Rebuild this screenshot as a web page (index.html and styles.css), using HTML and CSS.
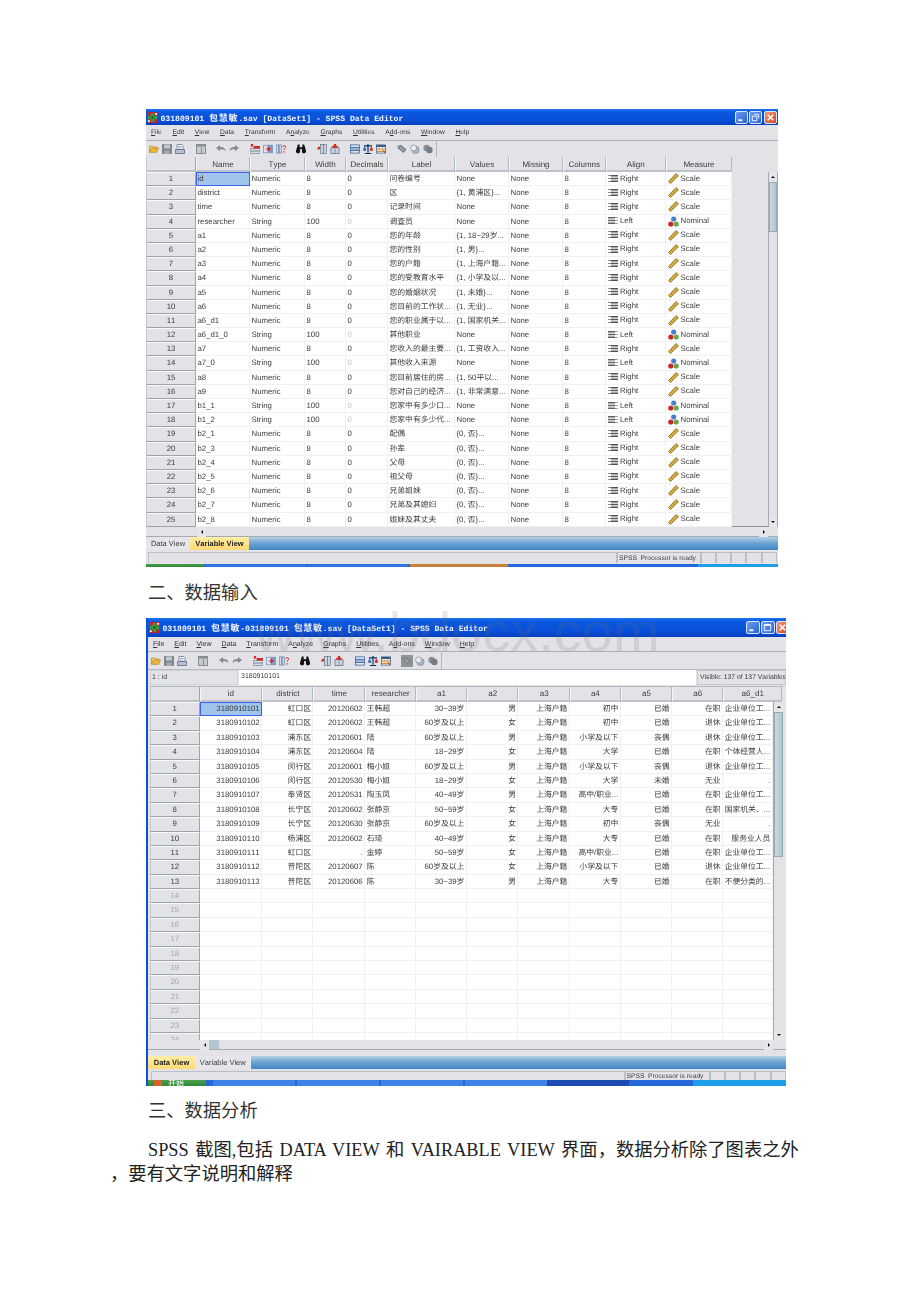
FILE: index.html
```html
<!DOCTYPE html>
<html lang="zh-CN">
<head>
	<meta charset="UTF-8">
	<title>SPSS</title>
	<link rel="stylesheet" href="styles.css">
</head>
<body>
<svg class="sprite" xmlns="http://www.w3.org/2000/svg">
	<symbol id="app" viewBox="0 0 12 12"><rect width="12" height="12" fill="#c8202a"/><path d="M4 1h4v3h3v4H8v3H4V8H1V4h3z" fill="#2f9e3a"/><path d="M1 9h2v2H1zM9 1h2v2H9z" fill="#fff"/><path d="M5 5h2v2H5z" fill="#143"/></symbol>
	<symbol id="min" viewBox="0 0 12 12"><rect x="2.5" y="8" width="4.5" height="2" fill="#fff"/></symbol>
	<symbol id="restore" viewBox="0 0 12 12"><path d="M4.5 2.5h5v4.5M2.5 4.5h5v5h-5z" fill="none" stroke="#fff"/></symbol>
	<symbol id="max" viewBox="0 0 12 12"><path d="M2.500 3.500h7v6h-7z" fill="none" stroke="#fff"/><path d="M2.500 3h7" stroke="#fff" stroke-width="1.500"/></symbol>
	<symbol id="close" viewBox="0 0 12 12"><path d="M3 3l6 6M9 3l-6 6" stroke="#fff" stroke-width="1.800"/></symbol>

	<symbol id="al-right" viewBox="0 0 10 8"><path d="M0 0h3v1H0zM0 3h3v1H0zM0 6h3v1H0z" fill="#8a8f96"/><path d="M3 0h7v1.500H3zM3 2.800h7v1.500H3zM3 5.600h7v1.500H3z" fill="#4d5359"/></symbol>
	<symbol id="al-left" viewBox="0 0 10 8"><path d="M0 0h7v1.500H0zM0 2.800h7v1.500H0zM0 5.600h7v1.500H0z" fill="#5b6167"/><path d="M7 0h3v1H7zM7 3h3v1H7zM7 6h3v1H7z" fill="#a0a5aa"/></symbol>
	<symbol id="scale" viewBox="0 0 11 11"><path d="M.5 8.500l7.500-8 2.500 2.300-8 7.700z" fill="#dcae3c" stroke="#6e5c22" stroke-width=".7"/><path d="M3 6.500l1 1M5 4.500l1 1M7 2.500l1 1" stroke="#6e5c22" stroke-width=".6"/></symbol>
	<symbol id="nominal" viewBox="0 0 11 11"><circle cx="5.700" cy="3" r="2.600" fill="#4a7fd0"/><circle cx="2.800" cy="8" r="2.600" fill="#c8262c"/><circle cx="8.200" cy="8" r="2.600" fill="#6aa84a"/></symbol>

	<symbol id="t-open" viewBox="0 0 12 10"><path d="M.5 9V1.500h4l1 1h4V4" fill="#f4d776" stroke="#a87e18" stroke-width=".8"/><path d="M.5 9l2.300-5h8.700L9 9z" fill="#f2b93a" stroke="#a87e18" stroke-width=".8"/></symbol>
	<symbol id="t-save" viewBox="0 0 10 10"><rect width="10" height="10" rx="1" fill="#7f868c"/><rect x="2" y=".5" width="6" height="4" fill="#c4c8cc"/><rect x="2.500" y="6.500" width="5" height="3.500" fill="#a6abb0"/></symbol>
	<symbol id="t-print" viewBox="0 0 10 10"><path d="M2 .5h5l1 1v4H2z" fill="#fff" stroke="#6e7a88" stroke-width=".8"/><path d="M.5 5.500h9V9.500h-9z" fill="#b7c0d0" stroke="#5c6a80" stroke-width=".8"/><path d="M3 2.500h3.500M3 4h3.500" stroke="#6a8cc0" stroke-width=".7"/></symbol>
	<symbol id="t-recall" viewBox="0 0 10 10"><rect width="10" height="10" fill="#888d92"/><rect x="1" y="2.500" width="8" height="6.500" fill="#c8cbce"/><path d="M5.500 3v6" stroke="#888d92"/></symbol>
	<symbol id="t-undo" viewBox="0 0 11 9"><path d="M4.500 0v2.300c3.500-.3 6 1.200 6 4.700-1.200-1.800-3-2.300-6-2.200V7L0 3.500z" fill="#868b90"/></symbol>
	<symbol id="t-redo" viewBox="0 0 11 9"><path d="M6.500 0v2.300C3 2 .5 3.500.5 7c1.200-1.800 3-2.300 6-2.200V7L11 3.500z" fill="#868b90"/></symbol>
	<symbol id="t-case" viewBox="0 0 11 11"><path d="M1 0h2.500v2.500h-1v1.200L.5 2.500H1z" fill="#d02a24"/><rect x="0" y="5" width="11" height="2.800" fill="#d6dde6" stroke="#5b6a7c" stroke-width=".6"/><rect x="0" y="7.800" width="11" height="2.800" fill="#d6dde6" stroke="#5b6a7c" stroke-width=".6"/><rect x="4" y="2.200" width="7" height="2.800" fill="#d02a24"/></symbol>
	<symbol id="t-var" viewBox="0 0 12 10"><rect width="12" height="10" fill="#7d9cc4"/><rect x="1" y="1" width="4.500" height="8" fill="#dfe6f0"/><path d="M3 5h5M6 2.500L9 5 6 7.500z" fill="#d8262a" stroke="#d8262a"/></symbol>
	<symbol id="t-vars" viewBox="0 0 12 11"><path d="M.5.500h2.500v10H.5zM4 .500h2.500v10H4z" fill="#d4dde8" stroke="#5a7aa0" stroke-width=".8"/><path d="M8 3c.5-2 3.500-2 3.500 0 0 1.500-1.700 1.500-1.700 3.500M9.800 8v2" fill="none" stroke="#d02a24" stroke-width="1.200"/></symbol>
	<symbol id="t-find" viewBox="0 0 11 10"><path d="M2 0h2v3h3V0h2l2 7a2.300 2.300 0 0 1-4.500 1V5h-2v3a2.300 2.300 0 0 1-4.500-1z" fill="#111"/></symbol>
	<symbol id="t-inscase" viewBox="0 0 11 11"><path d="M1 3h2.500v2.500H1zM0 5h3v1H0z" fill="#d02a24"/><rect x="4" y=".5" width="3" height="10" fill="#c9d4e0" stroke="#5a6c80" stroke-width=".7"/><rect x="7" y=".5" width="3.500" height="10" fill="#c9d4e0" stroke="#5a6c80" stroke-width=".7"/></symbol>
	<symbol id="t-insvar" viewBox="0 0 10 11"><path d="M.5 4h9v6.500h-9z" fill="#c9d4e0" stroke="#5a6c80" stroke-width=".8"/><path d="M5 4v6.500" stroke="#5a6c80" stroke-width=".7"/><path d="M3.800 0h2.400v2h1.800v2H2V2h1.800z" fill="#d02a24"/></symbol>
	<symbol id="t-split" viewBox="0 0 11 10"><rect x=".5" y=".5" width="10" height="9" fill="#dce6f0" stroke="#2e5a94" stroke-width=".8"/><path d="M.5 3.500h10M.5 6.500h10" stroke="#2e5a94"/><rect x="1" y="4" width="9" height="2" fill="#8fb0d8"/></symbol>
	<symbol id="t-weight" viewBox="0 0 11 11"><path d="M5.500 0v9.500M2 10.500h7M1 2h9" stroke="#0c2f66" stroke-width="1.300"/><path d="M0 6l1.800-3.500L3.600 6a1.800 1.800 0 0 1-3.600 0z" fill="#2f6ec0"/><path d="M7.400 6l1.800-3.500L11 6a1.800 1.800 0 0 1-3.600 0z" fill="#c8302c"/></symbol>
	<symbol id="t-select" viewBox="0 0 11 10"><rect x=".5" y=".5" width="10" height="9" fill="#f2f0e4" stroke="#3c5a88" stroke-width=".8"/><rect x=".5" y=".5" width="10" height="2.300" fill="#3c5a88"/><path d="M3.500 3v6.500M7 3v6.500" stroke="#b8c0cc"/><path d="M1 5h9M1 7.800h9" stroke="#e08a20" stroke-width="1.100"/><path d="M8 6.500l2 3" stroke="#c8202a"/></symbol>
	<symbol id="t-labels" viewBox="0 0 11 10"><path d="M.5 1.500l4-1 6 5-3.500 4-6-5z" fill="#7a8086"/><path d="M2 3l2-.5 4 3.300-1.500 1.700z" fill="#a3a8ad"/></symbol>
	<symbol id="t-sets" viewBox="0 0 11 10"><circle cx="6" cy="6" r="4" fill="#9eb8d0" stroke="#7e8790" stroke-width=".7"/><circle cx="4" cy="3.800" r="3.300" fill="#e8ecf0" stroke="#7e8790" stroke-width=".7"/></symbol>
	<symbol id="t-all" viewBox="0 0 11 10"><circle cx="4" cy="4" r="3.600" fill="#8a8f94"/><circle cx="7" cy="6" r="3.600" fill="#777c82"/></symbol>
</svg>

<div class="page">
	<section class="win win-vars">
		<div class="titlebar">
			<svg class="appicon"><use href="#app"/></svg>
			<span class="title">031809101 <i>包慧敏</i>.sav [DataSet1] - SPSS Data Editor</span>
			<span class="wbtns">
				<span class="wbtn"><svg><use href="#min"/></svg></span>
				<span class="wbtn"><svg><use href="#restore"/></svg></span>
				<span class="wbtn red"><svg><use href="#close"/></svg></span>
			</span>
		</div>
		<ul class="menu">
			<li><u>F</u>ile</li><li><u>E</u>dit</li><li><u>V</u>iew</li><li><u>D</u>ata</li><li><u>T</u>ransform</li><li>A<u>n</u>alyze</li><li><u>G</u>raphs</li><li><u>U</u>tilities</li><li>A<u>d</u>d-ons</li><li><u>W</u>indow</li><li><u>H</u>elp</li>
		</ul>
		<div class="toolbar">
			<div class="tgroup"><svg><use href="#t-open"/></svg><svg><use href="#t-save"/></svg><svg><use href="#t-print"/></svg></div>
			<div class="tgroup"><svg><use href="#t-recall"/></svg></div>
			<div class="tgroup"><svg><use href="#t-undo"/></svg><svg><use href="#t-redo"/></svg></div>
			<div class="tgroup"><svg><use href="#t-case"/></svg><svg><use href="#t-var"/></svg><svg><use href="#t-vars"/></svg></div>
			<div class="tgroup"><svg><use href="#t-find"/></svg></div>
			<div class="tgroup"><svg><use href="#t-inscase"/></svg><svg><use href="#t-insvar"/></svg></div>
			<div class="tgroup"><svg><use href="#t-split"/></svg><svg><use href="#t-weight"/></svg><svg><use href="#t-select"/></svg></div>
			<div class="tgroup last"><svg><use href="#t-labels"/></svg><svg><use href="#t-sets"/></svg><svg><use href="#t-all"/></svg></div>
		</div>
		<div class="sheet">
			<div class="row head"><b></b><span>Name</span><span>Type</span><span>Width</span><span>Decimals</span><span>Label</span><span>Values</span><span>Missing</span><span>Columns</span><span>Align</span><span>Measure</span></div>
			<div class="sheet-body">
				<div class="rows">
					<div class="row"><b>1</b><span class="sel">id</span><span>Numeric</span><span>8</span><span>0</span><span>问卷编号</span><span>None</span><span>None</span><span>8</span><span class="m"><svg class="al"><use href="#al-right"/></svg>Right</span><span class="m"><svg class="ms"><use href="#scale"/></svg>Scale</span></div>
					<div class="row"><b>2</b><span>district</span><span>Numeric</span><span>8</span><span>0</span><span>区</span><span>{1, 黄浦区}...</span><span>None</span><span>8</span><span class="m"><svg class="al"><use href="#al-right"/></svg>Right</span><span class="m"><svg class="ms"><use href="#scale"/></svg>Scale</span></div>
					<div class="row"><b>3</b><span>time</span><span>Numeric</span><span>8</span><span>0</span><span>记录时间</span><span>None</span><span>None</span><span>8</span><span class="m"><svg class="al"><use href="#al-right"/></svg>Right</span><span class="m"><svg class="ms"><use href="#scale"/></svg>Scale</span></div>
					<div class="row"><b>4</b><span>researcher</span><span>String</span><span>100</span><span class="off">0</span><span>调查员</span><span>None</span><span>None</span><span>8</span><span class="m"><svg class="al"><use href="#al-left"/></svg>Left</span><span class="m"><svg class="ms"><use href="#nominal"/></svg>Nominal</span></div>
					<div class="row"><b>5</b><span>a1</span><span>Numeric</span><span>8</span><span>0</span><span>您的年龄</span><span>{1, 18~29岁...</span><span>None</span><span>8</span><span class="m"><svg class="al"><use href="#al-right"/></svg>Right</span><span class="m"><svg class="ms"><use href="#scale"/></svg>Scale</span></div>
					<div class="row"><b>6</b><span>a2</span><span>Numeric</span><span>8</span><span>0</span><span>您的性别</span><span>{1, 男}...</span><span>None</span><span>8</span><span class="m"><svg class="al"><use href="#al-right"/></svg>Right</span><span class="m"><svg class="ms"><use href="#scale"/></svg>Scale</span></div>
					<div class="row"><b>7</b><span>a3</span><span>Numeric</span><span>8</span><span>0</span><span>您的户籍</span><span>{1, 上海户籍...</span><span>None</span><span>8</span><span class="m"><svg class="al"><use href="#al-right"/></svg>Right</span><span class="m"><svg class="ms"><use href="#scale"/></svg>Scale</span></div>
					<div class="row"><b>8</b><span>a4</span><span>Numeric</span><span>8</span><span>0</span><span>您的受教育水平</span><span>{1, 小学及以...</span><span>None</span><span>8</span><span class="m"><svg class="al"><use href="#al-right"/></svg>Right</span><span class="m"><svg class="ms"><use href="#scale"/></svg>Scale</span></div>
					<div class="row"><b>9</b><span>a5</span><span>Numeric</span><span>8</span><span>0</span><span>您的婚姻状况</span><span>{1, 未婚}...</span><span>None</span><span>8</span><span class="m"><svg class="al"><use href="#al-right"/></svg>Right</span><span class="m"><svg class="ms"><use href="#scale"/></svg>Scale</span></div>
					<div class="row"><b>10</b><span>a6</span><span>Numeric</span><span>8</span><span>0</span><span>您目前的工作状...</span><span>{1, 无业}...</span><span>None</span><span>8</span><span class="m"><svg class="al"><use href="#al-right"/></svg>Right</span><span class="m"><svg class="ms"><use href="#scale"/></svg>Scale</span></div>
					<div class="row"><b>11</b><span>a6_d1</span><span>Numeric</span><span>8</span><span>0</span><span>您的职业属于以...</span><span>{1, 国家机关...</span><span>None</span><span>8</span><span class="m"><svg class="al"><use href="#al-right"/></svg>Right</span><span class="m"><svg class="ms"><use href="#scale"/></svg>Scale</span></div>
					<div class="row"><b>12</b><span>a6_d1_0</span><span>String</span><span>100</span><span class="off">0</span><span>其他职业</span><span>None</span><span>None</span><span>8</span><span class="m"><svg class="al"><use href="#al-left"/></svg>Left</span><span class="m"><svg class="ms"><use href="#nominal"/></svg>Nominal</span></div>
					<div class="row"><b>13</b><span>a7</span><span>Numeric</span><span>8</span><span>0</span><span>您收入的最主要...</span><span>{1, 工资收入...</span><span>None</span><span>8</span><span class="m"><svg class="al"><use href="#al-right"/></svg>Right</span><span class="m"><svg class="ms"><use href="#scale"/></svg>Scale</span></div>
					<div class="row"><b>14</b><span>a7_0</span><span>String</span><span>100</span><span class="off">0</span><span>其他收入来源</span><span>None</span><span>None</span><span>8</span><span class="m"><svg class="al"><use href="#al-left"/></svg>Left</span><span class="m"><svg class="ms"><use href="#nominal"/></svg>Nominal</span></div>
					<div class="row"><b>15</b><span>a8</span><span>Numeric</span><span>8</span><span>0</span><span>您目前居住的房...</span><span>{1, 50平以...</span><span>None</span><span>8</span><span class="m"><svg class="al"><use href="#al-right"/></svg>Right</span><span class="m"><svg class="ms"><use href="#scale"/></svg>Scale</span></div>
					<div class="row"><b>16</b><span>a9</span><span>Numeric</span><span>8</span><span>0</span><span>您对自己的经济...</span><span>{1, 非常满意...</span><span>None</span><span>8</span><span class="m"><svg class="al"><use href="#al-right"/></svg>Right</span><span class="m"><svg class="ms"><use href="#scale"/></svg>Scale</span></div>
					<div class="row"><b>17</b><span>b1_1</span><span>String</span><span>100</span><span class="off">0</span><span>您家中有多少口...</span><span>None</span><span>None</span><span>8</span><span class="m"><svg class="al"><use href="#al-left"/></svg>Left</span><span class="m"><svg class="ms"><use href="#nominal"/></svg>Nominal</span></div>
					<div class="row"><b>18</b><span>b1_2</span><span>String</span><span>100</span><span class="off">0</span><span>您家中有多少代...</span><span>None</span><span>None</span><span>8</span><span class="m"><svg class="al"><use href="#al-left"/></svg>Left</span><span class="m"><svg class="ms"><use href="#nominal"/></svg>Nominal</span></div>
					<div class="row"><b>19</b><span>b2_1</span><span>Numeric</span><span>8</span><span>0</span><span>配偶</span><span>{0, 否}...</span><span>None</span><span>8</span><span class="m"><svg class="al"><use href="#al-right"/></svg>Right</span><span class="m"><svg class="ms"><use href="#scale"/></svg>Scale</span></div>
					<div class="row"><b>20</b><span>b2_3</span><span>Numeric</span><span>8</span><span>0</span><span>孙辈</span><span>{0, 否}...</span><span>None</span><span>8</span><span class="m"><svg class="al"><use href="#al-right"/></svg>Right</span><span class="m"><svg class="ms"><use href="#scale"/></svg>Scale</span></div>
					<div class="row"><b>21</b><span>b2_4</span><span>Numeric</span><span>8</span><span>0</span><span>父母</span><span>{0, 否}...</span><span>None</span><span>8</span><span class="m"><svg class="al"><use href="#al-right"/></svg>Right</span><span class="m"><svg class="ms"><use href="#scale"/></svg>Scale</span></div>
					<div class="row"><b>22</b><span>b2_5</span><span>Numeric</span><span>8</span><span>0</span><span>祖父母</span><span>{0, 否}...</span><span>None</span><span>8</span><span class="m"><svg class="al"><use href="#al-right"/></svg>Right</span><span class="m"><svg class="ms"><use href="#scale"/></svg>Scale</span></div>
					<div class="row"><b>23</b><span>b2_6</span><span>Numeric</span><span>8</span><span>0</span><span>兄弟姐妹</span><span>{0, 否}...</span><span>None</span><span>8</span><span class="m"><svg class="al"><use href="#al-right"/></svg>Right</span><span class="m"><svg class="ms"><use href="#scale"/></svg>Scale</span></div>
					<div class="row"><b>24</b><span>b2_7</span><span>Numeric</span><span>8</span><span>0</span><span>兄弟及其媳妇</span><span>{0, 否}...</span><span>None</span><span>8</span><span class="m"><svg class="al"><use href="#al-right"/></svg>Right</span><span class="m"><svg class="ms"><use href="#scale"/></svg>Scale</span></div>
					<div class="row"><b>25</b><span>b2_8</span><span>Numeric</span><span>8</span><span>0</span><span>姐妹及其丈夫</span><span>{0, 否}...</span><span>None</span><span>8</span><span class="m"><svg class="al"><use href="#al-right"/></svg>Right</span><span class="m"><svg class="ms"><use href="#scale"/></svg>Scale</span></div>
				</div>
				<div class="vscroll">
					<span class="sbtn up"></span><span class="thumb"></span><span class="track"></span><span class="sbtn down"></span>
				</div>
			</div>
		</div>
		<div class="hscroll">
			<span class="sbtn left"></span><span class="track"></span><span class="sbtn right"></span>
		</div>
		<div class="tabs">
			<span class="tab">Data View</span><span class="tab on">Variable View</span>
		</div>
		<div class="status">
			<span class="panel wide"></span><span class="panel msg">SPSS&nbsp; Processor is ready</span><span class="panel small"></span><span class="panel small"></span><span class="panel small"></span><span class="panel small"></span><span class="panel small"></span>
		</div>
		<div class="taskbar">
			<span class="start"></span><span class="tbtn"></span><span class="tbtn"></span><span class="tbtn orange"></span><span class="tray"></span>
		</div>
	</section>

	<h2 class="doc-head">二、数据输入</h2>

	<section class="win win-data">
		<div class="titlebar">
			<svg class="appicon"><use href="#app"/></svg>
			<span class="title">031809101 <i>包慧敏</i>-031809101 <i>包慧敏</i>.sav [DataSet1] - SPSS Data Editor</span>
			<span class="wbtns">
				<span class="wbtn"><svg><use href="#min"/></svg></span>
				<span class="wbtn"><svg><use href="#max"/></svg></span>
				<span class="wbtn red"><svg><use href="#close"/></svg></span>
			</span>
		</div>
		<ul class="menu">
			<li><u>F</u>ile</li><li><u>E</u>dit</li><li><u>V</u>iew</li><li><u>D</u>ata</li><li><u>T</u>ransform</li><li>A<u>n</u>alyze</li><li><u>G</u>raphs</li><li><u>U</u>tilities</li><li>A<u>d</u>d-ons</li><li><u>W</u>indow</li><li><u>H</u>elp</li>
		</ul>
		<div class="toolbar">
			<div class="tgroup"><svg><use href="#t-open"/></svg><svg><use href="#t-save"/></svg><svg><use href="#t-print"/></svg></div>
			<div class="tgroup"><svg><use href="#t-recall"/></svg></div>
			<div class="tgroup"><svg><use href="#t-undo"/></svg><svg><use href="#t-redo"/></svg></div>
			<div class="tgroup"><svg><use href="#t-case"/></svg><svg><use href="#t-var"/></svg><svg><use href="#t-vars"/></svg></div>
			<div class="tgroup"><svg><use href="#t-find"/></svg></div>
			<div class="tgroup"><svg><use href="#t-inscase"/></svg><svg><use href="#t-insvar"/></svg></div>
			<div class="tgroup"><svg><use href="#t-split"/></svg><svg><use href="#t-weight"/></svg><svg><use href="#t-select"/></svg></div>
			<div class="tgroup last"><svg class="pressed"><use href="#t-labels"/></svg><svg><use href="#t-sets"/></svg><svg><use href="#t-all"/></svg></div>
		</div>
		<div class="cellbar">
			<span class="cellname">1 : id</span><span class="cellvalue">3180910101</span><span class="visible">Visible: 137 of 137 Variables</span>
		</div>
		<div class="sheet">
			<div class="row head"><b></b><span>id</span><span>district</span><span>time</span><span>researcher</span><span>a1</span><span>a2</span><span>a3</span><span>a4</span><span>a5</span><span>a6</span><span>a6_d1</span></div>
			<div class="sheet-body">
				<div class="rows">
					<div class="row"><b>1</b><span class="sel">3180910101</span><span>虹口区</span><span>20120602</span><span>王韩超</span><span>30~39岁</span><span>男</span><span>上海户籍</span><span>初中</span><span>已婚</span><span>在职</span><span>企业单位工...</span></div>
					<div class="row"><b>2</b><span>3180910102</span><span>虹口区</span><span>20120602</span><span>王韩超</span><span>60岁及以上</span><span>女</span><span>上海户籍</span><span>初中</span><span>已婚</span><span>退休</span><span>企业单位工...</span></div>
					<div class="row"><b>3</b><span>3180910103</span><span>浦东区</span><span>20120601</span><span>陆</span><span>60岁及以上</span><span>男</span><span>上海户籍</span><span>小学及以下</span><span>丧偶</span><span>退休</span><span>企业单位工...</span></div>
					<div class="row"><b>4</b><span>3180910104</span><span>浦东区</span><span>20120604</span><span>陆</span><span>18~29岁</span><span>女</span><span>上海户籍</span><span>大学</span><span>已婚</span><span>在职</span><span>个体经营人...</span></div>
					<div class="row"><b>5</b><span>3180910105</span><span>闵行区</span><span>20120601</span><span>梅小姐</span><span>60岁及以上</span><span>男</span><span>上海户籍</span><span>小学及以下</span><span>丧偶</span><span>退休</span><span>企业单位工...</span></div>
					<div class="row"><b>6</b><span>3180910106</span><span>闵行区</span><span>20120530</span><span>梅小姐</span><span>18~29岁</span><span>女</span><span>上海户籍</span><span>大学</span><span>未婚</span><span>无业</span><span class="r">.</span></div>
					<div class="row"><b>7</b><span>3180910107</span><span>奉贤区</span><span>20120531</span><span>陶玉凤</span><span>40~49岁</span><span>男</span><span>上海户籍</span><span>高中/职业...</span><span>已婚</span><span>在职</span><span>企业单位工...</span></div>
					<div class="row"><b>8</b><span>3180910108</span><span>长宁区</span><span>20120602</span><span>张静京</span><span>50~59岁</span><span>女</span><span>上海户籍</span><span>大专</span><span>已婚</span><span>在职</span><span>国家机关、...</span></div>
					<div class="row"><b>9</b><span>3180910109</span><span>长宁区</span><span>20120630</span><span>张静京</span><span>60岁及以上</span><span>女</span><span>上海户籍</span><span>初中</span><span>丧偶</span><span>无业</span><span class="r">.</span></div>
					<div class="row"><b>10</b><span>3180910110</span><span>杨浦区</span><span>20120602</span><span>石琦</span><span>40~49岁</span><span>女</span><span>上海户籍</span><span>大专</span><span>已婚</span><span>在职</span><span class="r">服务业人员</span></div>
					<div class="row"><b>11</b><span>3180910111</span><span>虹口区</span><span>.</span><span>金婷</span><span>50~59岁</span><span>女</span><span>上海户籍</span><span>高中/职业...</span><span>已婚</span><span>在职</span><span>企业单位工...</span></div>
					<div class="row"><b>12</b><span>3180910112</span><span>普陀区</span><span>20120607</span><span>陈</span><span>60岁及以上</span><span>女</span><span>上海户籍</span><span>小学及以下</span><span>已婚</span><span>退休</span><span>企业单位工...</span></div>
					<div class="row"><b>13</b><span>3180910113</span><span>普陀区</span><span>20120606</span><span>陈</span><span>30~39岁</span><span>男</span><span>上海户籍</span><span>大专</span><span>已婚</span><span>在职</span><span>不便分类的...</span></div>
					<div class="row empty"><b>14</b><span></span><span></span><span></span><span></span><span></span><span></span><span></span><span></span><span></span><span></span><span></span></div>
					<div class="row empty"><b>15</b><span></span><span></span><span></span><span></span><span></span><span></span><span></span><span></span><span></span><span></span><span></span></div>
					<div class="row empty"><b>16</b><span></span><span></span><span></span><span></span><span></span><span></span><span></span><span></span><span></span><span></span><span></span></div>
					<div class="row empty"><b>17</b><span></span><span></span><span></span><span></span><span></span><span></span><span></span><span></span><span></span><span></span><span></span></div>
					<div class="row empty"><b>18</b><span></span><span></span><span></span><span></span><span></span><span></span><span></span><span></span><span></span><span></span><span></span></div>
					<div class="row empty"><b>19</b><span></span><span></span><span></span><span></span><span></span><span></span><span></span><span></span><span></span><span></span><span></span></div>
					<div class="row empty"><b>20</b><span></span><span></span><span></span><span></span><span></span><span></span><span></span><span></span><span></span><span></span><span></span></div>
					<div class="row empty"><b>21</b><span></span><span></span><span></span><span></span><span></span><span></span><span></span><span></span><span></span><span></span><span></span></div>
					<div class="row empty"><b>22</b><span></span><span></span><span></span><span></span><span></span><span></span><span></span><span></span><span></span><span></span><span></span></div>
					<div class="row empty"><b>23</b><span></span><span></span><span></span><span></span><span></span><span></span><span></span><span></span><span></span><span></span><span></span></div>
					<div class="row empty"><b>24</b><span></span><span></span><span></span><span></span><span></span><span></span><span></span><span></span><span></span><span></span><span></span></div>
				</div>
				<div class="vscroll">
					<span class="sbtn up"></span><span class="thumb"></span><span class="track"></span><span class="sbtn down"></span>
				</div>
			</div>
		</div>
		<div class="hscroll">
			<span class="sbtn left"></span><span class="hthumb"></span><span class="track"></span><span class="sbtn right"></span>
		</div>
		<div class="tabs">
			<span class="tab on">Data View</span><span class="tab">Variable View</span>
		</div>
		<div class="status">
			<span class="panel wide"></span><span class="panel msg">SPSS&nbsp; Processor is ready</span><span class="panel small"></span><span class="panel small"></span><span class="panel small"></span><span class="panel small"></span><span class="panel small"></span>
		</div>
		<div class="taskbar">
			<span class="start"><em></em>开始</span><span class="tbtn"></span><span class="tbtn"></span><span class="tbtn"></span><span class="tbtn"></span><span class="tbtn dark"></span><span class="tray"></span>
		</div>
	</section>

	<h2 class="doc-head second">三、数据分析</h2>
	<p class="doc-text">SPSS 截图,包括 DATA VIEW 和 VAIRABLE VIEW 界面，数据分析除了图表之外<br><span class="hang">，</span>要有文字说明和解释</p>

	<div class="watermark">www.bdocx.com</div>
</div>
</body>
</html>
```

FILE: styles.css
```css
*{
	margin: 0;
	padding: 0;
	box-sizing: border-box;
}
html,body{
	background-color: #fff;
}
li{
	list-style: none;
}
.sprite{
	display: none;
}
.page{
	position: relative;
	width: 920px;
	height: 1302px;
	padding-top: 109px;
	overflow: hidden;
	font-family: "Liberation Serif","Noto Sans CJK SC",serif;
}

/* document text */
.doc-head{
	margin: 14px 0 13px 148px;
	font-size: 18.3px;
	font-weight: normal;
	line-height: 24px;
	color: #333;
}
.doc-head.second{
	margin-top: 13px;
	margin-bottom: 15px;
}
.doc-text{
	margin-left: 148px;
	width: 680px;
	font-size: 18.3px;
	line-height: 24px;
	word-spacing: 2px;
	color: #222;
	white-space: nowrap;
}
.hang{
	margin-left: -38px;
}
.watermark{
	position: absolute;
	left: 255px;
	top: 604px;
	font: 56px/56px "Liberation Sans",sans-serif;
	color: rgba(110,110,110,.17);
	pointer-events: none;
}

/* spss window */
.win{
	display: flex;
	flex-direction: column;
	margin-left: 146px;
	background-color: #e3e3e7;
	font-family: "Liberation Sans","Noto Sans CJK SC",sans-serif;
	font-size: 7.8px;
	color: #3c3c3c;
	font-kerning: none;
	text-rendering: geometricPrecision;
	overflow: hidden;
	filter: blur(.35px);
}
.win-vars{
	width: 632px;
	height: 458px;
}
.win-data{
	width: 640px;
	height: 468px;
	border-left: 2px solid #0b50d6;
}

.titlebar{
	display: flex;
	align-items: center;
	flex: none;
	background: linear-gradient(#1f74ee,#0a58e0 18%,#0a4fd8 70%,#0640bd);
}
.win-vars .titlebar{
	height: 16px;
	padding: 0 1px;
}
.win-data .titlebar{
	height: 19px;
	padding: 0 0 0 1px;
}
.appicon{
	width: 11px;
	height: 11px;
	flex: none;
}
.title{
	margin-left: 2.500px;
	font: bold 8.100px "Liberation Mono","Noto Sans CJK SC",monospace;
	color: #f2f5ff;
	white-space: nowrap;
}
.title i{
	font-style: normal;
	font-size: 9px;
	letter-spacing: .7px;
}
.wbtns{
	display: flex;
	gap: 1.600px;
	margin-left: auto;
}
.wbtn{
	width: 13px;
	height: 13px;
	border: 1px solid #d8e4f8;
	border-radius: 2px;
	background: linear-gradient(135deg,#6f9cf0,#2a62d8);
}
.wbtn svg{
	display: block;
	width: 11px;
	height: 11px;
}
.wbtn.red{
	background: linear-gradient(135deg,#f09a78,#d8431e);
}
.win-data .wbtns{
	gap: 1px;
	margin-right: -4px;
}
.win-data .wbtn{
	width: 14px;
}

.menu{
	display: flex;
	flex: none;
	align-items: center;
	gap: 10.700px;
	font-size: 6.700px;
	color: #333;
	border-bottom: 1px solid #a9afb7;
}
.win-vars .menu{
	height: 16px;
	padding-left: 5px;
}
.win-data .menu{
	height: 15px;
	padding-left: 5px;
	gap: 10px;
	font-size: 7px;
}

.toolbar{
	display: flex;
	flex: none;
	align-items: center;
	gap: 10.500px;
}
.win-vars .toolbar{
	height: 16px;
	padding-left: 3px;
}
.win-data .toolbar{
	height: 18px;
	padding-left: 3px;
	gap: 11px;
	border-bottom: 1px solid #b4bac2;
}
.tgroup{
	display: flex;
	gap: 3px;
}
.tgroup svg{
	display: block;
	width: 10px;
	height: 10px;
}
.tgroup.last{
	height: 100%;
	align-items: center;
	padding-right: 3px;
	border-right: 1px solid #b4bac2;
}
.tgroup .pressed{
	background-color: #8f9499;
	outline: 1px solid #8f9499;
}

.cellbar{
	display: flex;
	flex: none;
	height: 15px;
	margin-bottom: 1px;
	line-height: 14px;
	font-size: 7px;
}
.cellname{
	width: 88px;
	margin-left: 2px;
	padding-left: 1px;
	border: 1px solid #d5d5d9;
}
.cellvalue{
	width: 457px;
	margin-left: 1px;
	padding-left: 2px;
	background-color: #fff;
}
.visible{
	flex: 1;
	margin-left: 1px;
	padding-left: 2px;
	font-size: 6.800px;
	white-space: nowrap;
	border: 1px solid #c4c8cd;
	overflow: hidden;
}

/* grids */
.sheet{
	flex: none;
}
.win-vars .sheet{
	height: 370px;
	border-bottom: 1px solid #8b939c;
}
.win-data .sheet{
	height: 354px;
	margin-left: 2px;
	margin-right: 3px;
	border-bottom: 1px solid #8b939c;
}
.sheet-body{
	display: flex;
	overflow: hidden;
}
.win-vars .sheet-body{
	height: 355px;
}
.win-data .sheet-body{
	height: 338px;
}
.rows{
	flex: none;
	background-color: #fff;
	overflow: hidden;
}
.win-vars .rows{
	width: 586px;
	margin-right: 36px;
}
.win-data .rows{
	width: 623.200px;
}
.row{
	display: grid;
	white-space: nowrap;
}
.win-vars .row{
	grid-template-columns: 50px 54px 55px 41px 42px 67px 54px 54px 42.500px 60.500px 66px;
	height: 14.200px;
	line-height: 14.200px;
}
.win-data .row{
	grid-template-columns: 49.500px 62.700px 51.300px 51.700px 51px 50.700px 51.600px 51.400px 51px 51.300px 51px 49.700px;
	height: 14.400px;
	line-height: 14.400px;
}
.row b{
	font-weight: normal;
	text-align: center;
	background-color: #e3e3e7;
	border-top: 1px solid #f8f8fa;
	border-left: 1px solid #c6cad0;
	border-right: 1px solid #9aa3ae;
	border-bottom: 1px solid #9aa3ae;
	line-height: 12px;
}
.row span{
	padding-left: 1.500px;
	border-right: 1px solid #f1f1f1;
	border-bottom: 1px solid #f1f1f1;
	overflow: hidden;
}
.row .m{
	display: flex;
	align-items: center;
}
.row .off{
	color: #c4c4c4;
}
.row .sel{
	background-color: #9fc5ea;
	outline: 1px solid #3f5ff0;
	outline-offset: -1px;
}
.al{
	width: 10px;
	height: 8px;
	margin: 0 2px 0 1px;
	flex: none;
}
.ms{
	width: 11px;
	height: 11px;
	margin-right: 2px;
	flex: none;
}

.row.head{
	background-color: #e3e3e7;
}
.win-vars .row.head{
	width: 586px;
	height: 15px;
	line-height: 15px;
	font-size: 8px;
}
.win-data .row.head{
	grid-template-columns: 49.500px 62.700px 51.300px 51.700px 51px 50.700px 51.600px 51.400px 51px 51.300px 51px 59.200px;
	height: 16px;
	line-height: 14px;
	font-size: 8px;
	border-top: 1px solid #b4bac2;
}
.row.head span{
	padding: 0;
	text-align: center;
	border-right: 1px solid #b2b9c2;
	border-bottom: 2px solid #bcc3cb;
	border-left: 1px solid #f6f6f8;
}
.row.head b{
	border-top: 0;
	border-bottom: 2px solid #bcc3cb;
}

.win-data .row span{
	padding: 0 1.500px 0 0;
	text-align: right;
}
.win-data .row span:nth-of-type(4),
.win-data .row span:nth-of-type(11){
	padding: 0 0 0 1.500px;
	text-align: left;
}
.win-data .row span.r{
	padding: 0 1.500px 0 0;
	text-align: right;
}
.win-data .row.head span{
	padding: 0;
	text-align: center;
}
.row.empty b{
	color: #a6a6a6;
}

/* scroll bars */
.vscroll{
	display: flex;
	flex-direction: column;
	flex: 1;
	border-left: 1px solid #a4abb3;
}
.win-vars .vscroll{
	border-right: 1px solid #a4abb3;
}
.thumb{
	background: linear-gradient(90deg,#c8d8e0,#aec5d2);
	border: 1px solid #98aab6;
}
.win-vars .thumb{
	height: 50px;
}
.win-data .thumb{
	height: 145px;
}
.track{
	flex: 1;
	background-color: #e3e3e7;
}
.sbtn{
	display: flex;
	flex: none;
	align-items: center;
	justify-content: center;
	height: 10px;
	background-color: #e6e6ea;
}
.sbtn::before{
	content: "";
	border: 2.500px solid transparent;
}
.up::before{
	border-bottom-color: #111;
	border-top-width: 0;
}
.down::before{
	border-top-color: #111;
	border-bottom-width: 0;
}
.left::before{
	border-right-color: #111;
	border-left-width: 0;
}
.right::before{
	border-left-color: #111;
	border-right-width: 0;
}
.hscroll{
	display: flex;
	flex: none;
	height: 10px;
	border-bottom: 1px solid #a4abb3;
}
.hscroll .sbtn{
	width: 9px;
}
.win-vars .hscroll{
	padding: 0 10px 0 51px;
}
.win-data .hscroll{
	margin-right: 0;
	padding: 0 13px 0 52px;
}
.hthumb{
	width: 10px;
	background-color: #b4c6d2;
}

/* tabs + status */
.tabs{
	display: flex;
	flex: none;
	height: 13px;
	background: linear-gradient(#b4d0e6,#6fa6d2 45%,#3f87c6);
	line-height: 13px;
	font-size: 7.500px;
	text-align: center;
}
.win-data .tabs{
	margin: 6px 0 0 0;
	padding-left: 0;
}
.tab{
	background-color: #e6e6ea;
}
.win-vars .tab{
	width: 44px;
}
.win-vars .tab.on{
	width: 59px;
}
.win-data .tab{
	width: 47px;
}
.win-data .tab + .tab{
	width: 55.500px;
}
.tab.on{
	font-weight: bold;
	color: #222;
	background: linear-gradient(#ffeea8,#ffd874);
}
.status{
	display: flex;
	flex: none;
	font-size: 6.700px;
	white-space: nowrap;
}
.win-vars .status{
	height: 13px;
	margin-top: 1px;
	padding: 1px 1px 1px 2px;
	line-height: 11px;
}
.win-data .status{
	height: 9px;
	margin-top: 2px;
	padding: 0 0 0 3px;
	line-height: 9px;
}
.panel{
	flex: none;
	border: 1px solid #b9bfc6;
	border-bottom: 0;
}
.panel.wide{
	flex: 1;
}
.panel.msg{
	padding-left: 1px;
}
.win-vars .panel.msg{
	width: 83.500px;
}
.win-data .panel.msg{
	width: 85px;
}
.panel.small{
	width: 15.300px;
}
.taskbar{
	display: flex;
	flex: none;
	background-color: #2468dc;
	overflow: hidden;
}
.win-vars .taskbar{
	height: 3px;
}
.win-data .taskbar{
	height: 6px;
}
.start{
	flex: none;
	width: 58px;
	background: linear-gradient(#4d9c4c,#2f8a36);
	font-size: 8px;
	line-height: 8px;
	color: #fff;
	white-space: nowrap;
}
.start em{
	display: inline-block;
	width: 8px;
	height: 6px;
	margin: 0 6px 0 6px;
	background-color: #d8642a;
}
.tbtn{
	flex: none;
	width: 100px;
	margin-left: 2px;
	background-color: #2f74e0;
}
.tbtn.orange{
	width: 98px;
	background-color: #c9813a;
}
.win-data .tbtn{
	width: 82px;
	background-color: #3d82e6;
}
.win-data .start + .tbtn{
	margin-left: 7px;
}
.win-data .tbtn.dark{
	margin-left: 0;
	background-color: #1c4cb0;
}
.tray{
	flex: none;
	width: 80px;
	margin-left: auto;
	background-color: #1f9fe8;
}
.win-data .tray{
	width: 93px;
}
```
